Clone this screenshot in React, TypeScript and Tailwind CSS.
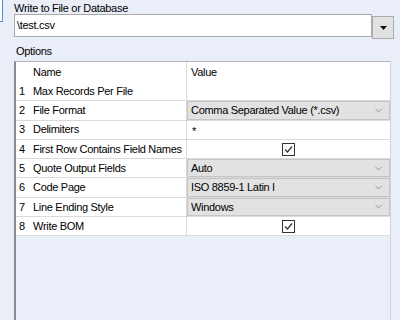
import { ChevronDown } from "lucide-react";

type Row = {
  name: string;
  kind: "text" | "combo" | "check";
  value?: string;
};

const ROWS: Row[] = [
  { name: "Max Records Per File", kind: "text", value: "" },
  { name: "File Format", kind: "combo", value: "Comma Separated Value (*.csv)" },
  { name: "Delimiters", kind: "text", value: "*" },
  { name: "First Row Contains Field Names", kind: "check" },
  { name: "Quote Output Fields", kind: "combo", value: "Auto" },
  { name: "Code Page", kind: "combo", value: "ISO 8859-1 Latin I" },
  { name: "Line Ending Style", kind: "combo", value: "Windows" },
  { name: "Write BOM", kind: "check" },
];

function CheckBox() {
  return (
    <div className="flex h-[13px] w-[13px] items-center justify-center border border-[#333333] bg-white">
      <svg width="11" height="11" viewBox="0 0 11 11">
        <path d="M2 5.5 L4.5 8 L9 2.5" fill="none" stroke="#333333" strokeWidth="1.2" />
      </svg>
    </div>
  );
}

function ValueCell({ row }: { row: Row }) {
  if (row.kind === "combo") {
    return (
      <div className="flex h-full flex-1 items-center border border-[#c4c4c4] bg-[#e2e2e2] pl-[3px] pr-[5px]">
        <span className="flex-1 truncate">{row.value}</span>
        <ChevronDown size={11} strokeWidth={1.5} className="text-[#707070]" />
      </div>
    );
  }
  if (row.kind === "check") {
    return (
      <div className="flex h-full flex-1 items-center justify-center">
        <CheckBox />
      </div>
    );
  }
  return (
    <div className="flex h-full flex-1 items-start pl-[5px] pt-[2px]">
      <span>{row.value}</span>
    </div>
  );
}

export default function App() {
  return (
    <div
      className="relative h-[320px] w-[400px] overflow-hidden bg-[#e9eef8] text-[11px] tracking-[-0.3px] text-black"
      style={{ fontFamily: '"Liberation Sans", Arial, sans-serif' }}
    >
      {/* edge of the neighbouring control */}
      <div className="absolute left-[-2px] top-[-2px] h-[24px] w-[5px] border border-[#4a8fd9] bg-white" />

      <div className="flex h-full flex-col pl-[14px] pr-[6px]">
        <div className="pt-[2px] leading-[12px]">Write to File or Database</div>

        <div className="flex items-start">
          <div className="flex h-[23px] flex-1 items-center border border-[#a9a9a9] bg-white pl-[2px]">
            \test.csv
          </div>
          <button className="mt-[2px] flex h-[23px] w-[22px] items-center justify-center border border-[#adadad] bg-[#e1e1e1]">
            <svg width="7" height="4" viewBox="0 0 7 4">
              <path d="M0 0 H7 L3.5 4 Z" fill="#111111" />
            </svg>
          </button>
        </div>

        <div className="mt-[5px] pl-[2px] leading-[14px]">Options</div>

        <div className="mr-[3px] mt-[3px] flex flex-1 flex-col border-l-2 border-r border-t border-l-[#8c8c8c] border-r-[#cfd3da] border-t-[#b4b4b4]">
          <div className="flex h-[20px] bg-white">
            <div className="w-[17px]" />
            <div className="flex w-[154px] items-center border-r border-[#dadada]">Name</div>
            <div className="flex flex-1 items-center pl-[4px]">Value</div>
          </div>
          {ROWS.map((row, i) => (
            <div key={row.name} className="flex h-[19.3px] border-b border-[#dadada] bg-white">
              <div className="flex w-[17px] items-center pl-[3px]">{i + 1}</div>
              <div className="flex w-[154px] items-center whitespace-nowrap border-r border-[#dadada]">
                {row.name}
              </div>
              <ValueCell row={row} />
            </div>
          ))}
        </div>
      </div>
    </div>
  );
}
